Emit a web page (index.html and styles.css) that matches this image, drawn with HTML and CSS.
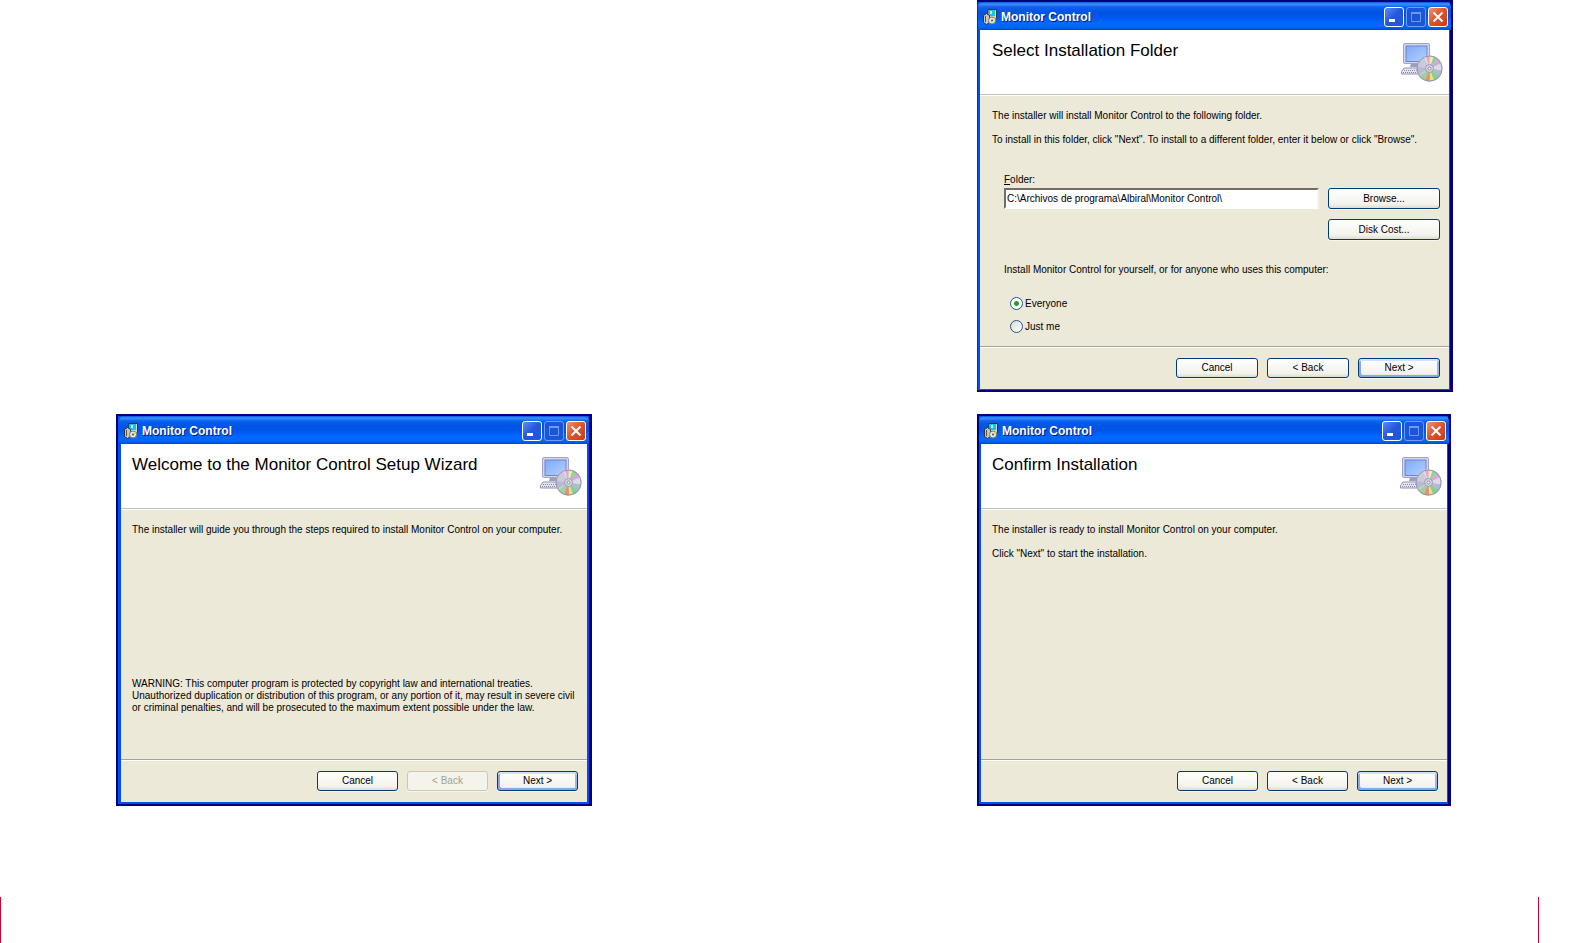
FILE: index.html
```html
<!DOCTYPE html>
<html lang="en">
<head>
<meta charset="utf-8">
<title>Monitor Control</title>
<link rel="stylesheet" href="styles.css">
</head>
<body>
<svg class="defs" width="0" height="0" aria-hidden="true">
  <defs>
    <linearGradient id="screen" x1="0" y1="0" x2="1" y2="1">
      <stop offset="0" stop-color="#7fa8f8"/><stop offset="1" stop-color="#b4d2ff"/>
    </linearGradient>
    <clipPath id="disc-clip"><circle cx="28.500" cy="25.500" r="13"/></clipPath>
    <symbol id="setup" viewBox="0 0 42 39">
      <path d="M10 20h11l1 4H9z" fill="#9a9cc0"/>
      <rect x="2.500" y=".5" width="26" height="20" rx="1.500" fill="#d4d4ea" stroke="#a3a3c6"/>
      <rect x="5" y="3" width="21" height="15.500" fill="url(#screen)" stroke="#6d84d2"/>
      <path d="M3 25h20v6H.5v-2.500z" fill="#e6e6f2" stroke="#8f90b4"/>
      <path d="M3 27.500h16M2 29.500h16" stroke="#8587a8" stroke-dasharray="1 1"/>
      <g clip-path="url(#disc-clip)">
        <path d="M15 12h27v27H15z" fill="#c9cbd8"/>
        <path d="M28.500 25.500L21 10h9z" fill="#e2dde8"/>
        <path d="M28.500 25.500L24 10h5z" fill="#ee9fdc"/>
        <path d="M28.500 25.500L29 10h5z" fill="#f0efa0"/>
        <path d="M28.500 25.500L34 10l5 3z" fill="#8fd49c"/>
        <path d="M28.500 25.500L39 13l4 6z" fill="#d8a6dc"/>
        <path d="M28.500 25.500L43 19v9z" fill="#dcdce6"/>
        <path d="M28.500 25.500L43 28l-3 7z" fill="#b7b9cc"/>
        <path d="M28.500 25.500L40 35l-6 5z" fill="#85cf9a"/>
        <path d="M28.500 25.500L34 40h-5z" fill="#e9e476"/>
        <path d="M28.500 25.500L29 40h-6z" fill="#f08a70"/>
        <path d="M28.500 25.500L23 40l-6-5z" fill="#9bd49a"/>
        <path d="M28.500 25.500L14 33v-9z" fill="#b9bace"/>
      </g>
      <circle cx="28.500" cy="25.500" r="12.500" fill="none" stroke="#9495ae"/>
      <circle cx="28.500" cy="25.500" r="4" fill="#d5d6e2" stroke="#9a9bb2"/>
      <circle cx="28.500" cy="25.500" r="1.500" fill="#fff" stroke="#85869f"/>
    </symbol>
    <symbol id="package" viewBox="0 0 15 16">
      <path d="M5 .5h8.500V9L12 11H5z" fill="#d8d8d0" stroke="#333"/>
      <path d="M6 1h6v6H6z" fill="#19c4e8"/><path d="M7 2h2v3H7z" fill="#b8f6ff"/>
      <path d="M.5 6.500l3-2 3 2v7l-3 2-3-2z" fill="#c9c9b8" stroke="#333"/>
      <path d="M2.500 7v6" stroke="#555"/>
      <circle cx="9" cy="11.500" r="3.500" fill="#e6e6d8" stroke="#777"/>
      <path d="M9 11.500l2-3 1.500 2z" fill="#efd94a"/><circle cx="9" cy="11.500" r="1" fill="#357"/>
    </symbol>
    <symbol id="minimize" viewBox="0 0 18 18"><path d="M4 11h6v3H4z" fill="#fff"/></symbol>
    <symbol id="maximize" viewBox="0 0 18 18"><path d="M4 5.500h10M4.500 5v8.500h9V5" fill="none" stroke="#7398f0"/><path d="M4 5h10" stroke="#7398f0" stroke-width="2"/></symbol>
    <symbol id="close" viewBox="0 0 18 18"><path d="M4.500 4.500l9 9M13.500 4.500l-9 9" stroke="#fff" stroke-width="2"/></symbol>
  </defs>
</svg>

<main class="sheet">
  <section class="window window-folder" aria-labelledby="h-folder">
    <header class="titlebar">
      <svg class="title-icon" aria-hidden="true"><use href="#package"/></svg>
      <span class="title">Monitor Control</span>
      <button class="cap" type="button" aria-label="Minimize"><svg><use href="#minimize"/></svg></button>
      <button class="cap cap-off" type="button" aria-label="Maximize" disabled><svg><use href="#maximize"/></svg></button>
      <button class="cap cap-close" type="button" aria-label="Close"><svg><use href="#close"/></svg></button>
    </header>
    <div class="banner">
      <h2 class="heading" id="h-folder">Select Installation Folder</h2>
      <svg class="banner-icon" aria-hidden="true"><use href="#setup"/></svg>
    </div>
    <form class="form">
      <div class="content">
        <p class="text">The installer will install Monitor Control to the following folder.</p>
        <p class="text">To install in this folder, click "Next". To install to a different folder, enter it below or click "Browse".</p>
        <div class="folder">
          <label class="folder-label" for="folder"><u>F</u>older:</label>
          <input class="folder-input" id="folder" type="text" value="C:\Archivos de programa\Albiral\Monitor Control\">
          <button class="button" type="button">Browse...</button>
          <button class="button disk" type="button">Disk Cost...</button>
        </div>
        <fieldset class="scope">
          <legend class="scope-label">Install Monitor Control for yourself, or for anyone who uses this computer:</legend>
          <label class="option"><input class="radio" type="radio" name="scope" checked>Everyone</label>
          <label class="option"><input class="radio" type="radio" name="scope">Just me</label>
        </fieldset>
      </div>
      <div class="actions">
        <button class="button" type="button">Cancel</button>
        <button class="button" type="button">&lt; Back</button>
        <button class="button button-default" type="button">Next &gt;</button>
      </div>
    </form>
  </section>

  <section class="window window-welcome" aria-labelledby="h-welcome">
    <header class="titlebar">
      <svg class="title-icon" aria-hidden="true"><use href="#package"/></svg>
      <span class="title">Monitor Control</span>
      <button class="cap" type="button" aria-label="Minimize"><svg><use href="#minimize"/></svg></button>
      <button class="cap cap-off" type="button" aria-label="Maximize" disabled><svg><use href="#maximize"/></svg></button>
      <button class="cap cap-close" type="button" aria-label="Close"><svg><use href="#close"/></svg></button>
    </header>
    <div class="banner">
      <h2 class="heading" id="h-welcome">Welcome to the Monitor Control Setup Wizard</h2>
      <svg class="banner-icon" aria-hidden="true"><use href="#setup"/></svg>
    </div>
    <div class="content">
      <p class="text">The installer will guide you through the steps required to install Monitor Control on your computer.</p>
      <p class="text warning">WARNING: This computer program is protected by copyright law and international treaties.<br>Unauthorized duplication or distribution of this program, or any portion of it, may result in severe civil<br>or criminal penalties, and will be prosecuted to the maximum extent possible under the law.</p>
    </div>
    <div class="actions">
      <button class="button" type="button">Cancel</button>
      <button class="button" type="button" disabled>&lt; Back</button>
      <button class="button button-default" type="button">Next &gt;</button>
    </div>
  </section>

  <section class="window window-confirm" aria-labelledby="h-confirm">
    <header class="titlebar">
      <svg class="title-icon" aria-hidden="true"><use href="#package"/></svg>
      <span class="title">Monitor Control</span>
      <button class="cap" type="button" aria-label="Minimize"><svg><use href="#minimize"/></svg></button>
      <button class="cap cap-off" type="button" aria-label="Maximize" disabled><svg><use href="#maximize"/></svg></button>
      <button class="cap cap-close" type="button" aria-label="Close"><svg><use href="#close"/></svg></button>
    </header>
    <div class="banner">
      <h2 class="heading" id="h-confirm">Confirm Installation</h2>
      <svg class="banner-icon" aria-hidden="true"><use href="#setup"/></svg>
    </div>
    <div class="content">
      <p class="text">The installer is ready to install Monitor Control on your computer.</p>
      <p class="text">Click "Next" to start the installation.</p>
    </div>
    <div class="actions">
      <button class="button" type="button">Cancel</button>
      <button class="button" type="button">&lt; Back</button>
      <button class="button button-default" type="button">Next &gt;</button>
    </div>
  </section>
</main>
<footer class="margins"></footer>
</body>
</html>
```

FILE: styles.css
```css
* { box-sizing: border-box; }

body {
  margin: 0;
  min-height: 100vh;
  display: flex;
  flex-direction: column;
  justify-content: space-between;
  background: #fff;
  color: #000;
  font: 10px/12px "Liberation Sans", Arial, sans-serif;
}

.defs { position: absolute; }

/* Two facing pages, each with a column of dialogs */
.sheet {
  display: grid;
  grid-template-columns: 116fr 476fr 385fr 476fr 123fr;
  row-gap: 22px;
}

.margins {
  height: 46px;
  margin-right: 37px;
  border: solid #d0022d;
  border-width: 0 1px;
}

.window {
  --edge: 11px;
  --icon-edge: 5px;
  --key: 81px;
  display: flex;
  flex-direction: column;
  min-width: 0;
  min-height: 392px;
  padding: 2px 5px 4px;
  background:
    linear-gradient(#00007c, #00007c) top / 100% 2px no-repeat,
    linear-gradient(#00007c, #00007c) bottom / 100% 2px no-repeat,
    linear-gradient(90deg, #00007c 2px, #0050ee 2px calc(100% - 3px), #00007c calc(100% - 3px));
}
.window-folder {
  --edge: 12px;
  --icon-edge: 6px;
  --key: 82px;
  grid-area: 1 / 4;
  padding: 2px 4px 3px 3px;
  background:
    linear-gradient(#00007c, #00007c) top / 100% 2px no-repeat,
    linear-gradient(#00007c, #00007c) bottom / 100% 2px no-repeat,
    linear-gradient(90deg, #0030c8 1px, #0050ee 1px calc(100% - 3px), #00007c calc(100% - 3px));
}
.window-welcome { grid-area: 2 / 2; }
.window-confirm { grid-area: 2 / 4; margin-right: 2px; padding: 2px 4px 4px; }

.titlebar {
  display: flex;
  align-items: center;
  gap: 2px;
  height: 28px;
  flex: none;
  margin: 0 -2px;
  padding: 2px 3px 0 5px;
  border-radius: 5px 5px 0 0;
  background: linear-gradient(#0a50d8, #3a94ff 2px, #0a62ee 5px, #0054e3 10px, #0056ea 15px, #0069ff 21px, #0066fb 25px, #0047cf);
}
.title-icon { width: 15px; height: 16px; }
.title {
  flex: 1;
  padding-left: 1px;
  color: #fff;
  font: bold 12px/16px "Liberation Sans", Arial, sans-serif;
  text-shadow: 1px 1px #0a1883;
}

.cap {
  width: 20px;
  height: 20px;
  padding: 0;
  border: 1px solid #fff;
  border-radius: 3px;
  background: linear-gradient(135deg, #5a8cf4, #2457dc 50%, #1f55e0);
}
.cap svg { display: block; width: 18px; height: 18px; }
.cap-off { border-color: #6f9cf5; background: #1a56dc; }
.cap-close { background: linear-gradient(135deg, #f09070, #e0502c 50%, #c93a14); }

.banner {
  display: flex;
  justify-content: space-between;
  flex: none;
  height: 66px;
  padding: 11px var(--icon-edge) 0 var(--edge);
  background: #fff;
  border-bottom: 1px solid #fff;
  box-shadow: inset 0 -1px #c4c2b8;
}
.heading {
  margin: 0;
  font: 17px/20px "Liberation Sans", Arial, sans-serif;
}
.banner-icon { width: 42px; height: 39px; margin-top: 2px; }

.form { display: flex; flex-direction: column; flex: 1; }
.content {
  display: flex;
  flex-direction: column;
  gap: 12px;
  flex: 1;
  padding: 14px 9px 12px var(--edge);
  background: #ece9d8;
}
.text { margin: 0; }
.warning { margin-top: auto; padding-bottom: 33px; }

.folder {
  display: grid;
  grid-template-columns: 1fr 112px;
  gap: 10px 9px;
  padding: 16px 0 0 12px;
}
.folder-label { grid-column: 1 / 3; margin-bottom: -8px; }
.folder-input {
  width: 100%;
  min-width: 0;
  height: 21px;
  padding: 0 1px 1px;
  border: 2px solid;
  border-color: #716f64 #f6f4ea #fff #716f64;
  background: #fff;
  color: #000;
  font: inherit;
}
.disk { grid-column: 2; }

.scope {
  display: flex;
  flex-direction: column;
  gap: 10px;
  min-width: 0;
  margin: 0;
  padding: 12px 0 0 12px;
  border: 0;
}
.scope-label { padding: 0; margin-bottom: 11px; float: left; }
.option { display: flex; align-items: center; gap: 2px; padding-left: 6px; }
.radio {
  appearance: none;
  width: 13px;
  height: 13px;
  margin: 0;
  border: 1px solid #21568c;
  border-radius: 50%;
  background: linear-gradient(135deg, #dcdcd4, #fff);
}
.radio:checked { background: radial-gradient(circle, #21a121 2px, #fff 3px); }

.button {
  height: 20px;
  padding: 0;
  border: 1px solid #003c74;
  border-radius: 3px;
  background: linear-gradient(#fff, #f3f2ec 80%, #dfdccf);
  box-shadow: 0 1px #f8f6ec;
  color: #000;
  font: inherit;
}
.folder .button { height: 21px; }
.button-default { box-shadow: 0 1px #f8f6ec, inset 0 2px #cee3ff, inset 2px -2px #8aa8e8, inset -2px 0 #9bb8ee; }
.button:disabled { border-color: #c9c7ba; background: #f5f4ea; color: #a1a192; }

.actions {
  display: grid;
  grid-template-columns: repeat(3, var(--key));
  justify-content: end;
  gap: 9px;
  flex: none;
  padding: 11px 9px;
  border-top: 1px solid #a5a498;
  box-shadow: inset 0 1px #fff;
  background: #ece9d8;
}
```
